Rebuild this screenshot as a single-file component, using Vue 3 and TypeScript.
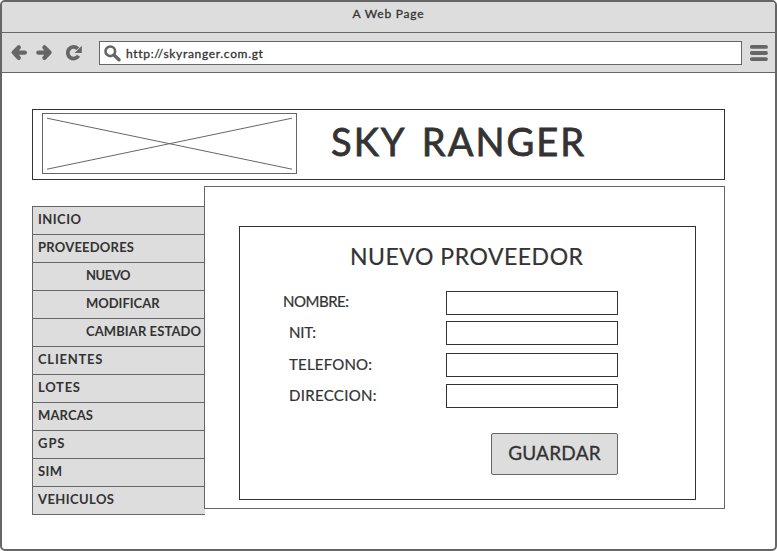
<script setup lang="ts">
import type { Directive } from 'vue'

interface MenuItem {
  label: string
  width: number
  sub?: boolean
}

interface Field {
  id: string
  label: string
  width: number
}

const menu: MenuItem[] = [
  { label: 'INICIO', width: 43 },
  { label: 'PROVEEDORES', width: 96 },
  { label: 'NUEVO', width: 44.5, sub: true },
  { label: 'MODIFICAR', width: 73.5, sub: true },
  { label: 'CAMBIAR ESTADO', width: 115, sub: true },
  { label: 'CLIENTES', width: 64.5 },
  { label: 'LOTES', width: 42 },
  { label: 'MARCAS', width: 55 },
  { label: 'GPS', width: 26.5 },
  { label: 'SIM', width: 24 },
  { label: 'VEHICULOS', width: 76 },
]

const fields: Field[] = [
  { id: 'nombre', label: 'NOMBRE:', width: 66 },
  { id: 'nit', label: 'NIT:', width: 27 },
  { id: 'telefono', label: 'TELEFONO:', width: 83 },
  { id: 'direccion', label: 'DIRECCION:', width: 87.5 },
]

// Tracks the letters out (or in) so that a caption takes the given width.
const vFit: Directive<HTMLElement, number> = {
  mounted(el, { value }) {
    const count = (el.textContent ?? '').trim().length
    const natural = el.getBoundingClientRect().width
    if (count > 1) el.style.letterSpacing = `${(value - natural) / (count - 1)}px`
  },
}
</script>

<template>
  <div class="window">
    <header class="titlebar"><span v-fit="71" class="fit">A Web Page</span></header>

    <nav class="toolbar">
      <svg class="arrow" width="17" height="16" viewBox="0 0 17 16">
        <path d="M8.7 2.4 3.7 7.6l5 5.2M4 7.6h10.8" />
      </svg>
      <svg class="arrow forward" width="17" height="16" viewBox="0 0 17 16">
        <path d="M8.5 2.4l5 5.2-5 5.2M13.2 7.6H2.4" />
      </svg>
      <svg class="reload" width="17" height="16" viewBox="0 0 17 16">
        <path class="ring" d="M12.8 3.8A5.8 5.8 0 1 0 13.5 10.8" />
        <path class="tip" d="M16.8 .8V8H9.6z" />
      </svg>
      <div class="address">
        <svg class="search" width="17" height="17" viewBox="0 0 17 17">
          <circle cx="6.3" cy="6.3" r="4.8" />
          <path d="M10 10l5 4.8" />
        </svg>
        <span v-fit="136.5" class="fit url">http://skyranger.com.gt</span>
      </div>
      <svg class="burger" width="19" height="18" viewBox="0 0 19 18">
        <path d="M2.8 2.9h14.2M2.8 9h14.2M2.8 15.1h14.2" />
      </svg>
    </nav>

    <main class="page">
      <section class="banner">
        <svg class="picture" width="255" height="61" viewBox="0 0 255 61">
          <rect x=".5" y=".5" width="254" height="60" />
          <path d="M5 5.2 250 56.2M5 56.2 250 5.2" />
        </svg>
        <h1><span v-fit="253" class="fit">SKY RANGER</span></h1>
      </section>

      <div class="body">
        <ul class="menu">
          <li v-for="item in menu" :key="item.label" :class="{ sub: item.sub }">
            <span v-fit="item.width" class="fit">{{ item.label }}</span>
          </li>
        </ul>

        <section class="panel">
          <form class="card" @submit.prevent>
            <h2><span v-fit="233" class="fit">NUEVO PROVEEDOR</span></h2>
            <div v-for="field in fields" :key="field.id" class="field" :class="field.id">
              <label :for="field.id"><span v-fit="field.width" class="fit">{{ field.label }}</span></label>
              <input :id="field.id" type="text" />
            </div>
            <button type="submit"><span v-fit="92.5" class="fit">GUARDAR</span></button>
          </form>
        </section>
      </div>
    </main>
  </div>
</template>

<style>
body {
  background: #fff;
}
</style>

<style scoped>
.window {
  box-sizing: border-box;
  width: 777px;
  height: 551px;
  border: 2px solid #666;
  border-radius: 5px;
  background: #fff;
  color: #333;
  font-family: Lato, "Liberation Sans", sans-serif;
  overflow: hidden;
}
.fit {
  display: inline-block;
  white-space: nowrap;
}
.titlebar {
  height: 30px;
  border-bottom: 1px solid #666;
  background: #ddd;
  text-align: center;
  font-size: 12px;
  line-height: 24px;
  -webkit-text-stroke: 0.3px #333;
}
.toolbar {
  display: flex;
  align-items: flex-start;
  box-sizing: border-box;
  height: 40px;
  padding: 8px 7px 0 8px;
  border-bottom: 1px solid #666;
  background: #ddd;
}
.toolbar svg {
  flex: none;
  fill: none;
  stroke: #666;
}
.toolbar .arrow {
  margin-top: 4px;
  stroke-width: 4.4;
  stroke-linecap: round;
  stroke-linejoin: round;
  overflow: visible;
}
.toolbar .forward {
  margin-left: 9px;
}
.reload {
  margin: 4px 0 0 12px;
}
.toolbar .ring {
  stroke-width: 3.8;
}
.toolbar .tip {
  fill: #666;
  stroke: none;
}
.address {
  display: flex;
  box-sizing: border-box;
  width: 643px;
  height: 24px;
  margin-left: 17px;
  border: 1px solid #666;
  background: #fff;
}
.toolbar .search {
  margin: 3px 0 0 4px;
  stroke-width: 2.6;
}
.search path {
  stroke-width: 3.4;
  stroke-linecap: round;
}
.url {
  margin-left: 5px;
  font-size: 12px;
  line-height: 23px;
  -webkit-text-stroke: 0.3px #333;
}
.burger {
  margin: 3px 0 0 7px;
  stroke-width: 3.8;
  stroke-linecap: round;
}
.page {
  padding: 36px 50px 0 30px;
}
.banner {
  display: flex;
  box-sizing: border-box;
  height: 71px;
  padding: 3px 9px;
  border: 1px solid #333;
}
.picture {
  flex: none;
  fill: none;
  stroke: #666;
}
h1,
h2 {
  margin: 0;
  font-weight: 400;
}
h1 {
  margin-left: 34px;
  font-size: 38px;
  line-height: 56px;
  word-spacing: 5px;
  -webkit-text-stroke: 0.8px #333;
}
.body {
  display: flex;
  align-items: flex-start;
  margin-top: 6px;
}
.menu {
  box-sizing: border-box;
  width: 173px;
  margin: 20px -1px 0 0;
  padding: 0;
  border: solid #666;
  border-width: 0 0 1px 1px;
  background: #ddd;
  list-style: none;
  font-size: 13px;
  font-weight: 700;
  line-height: 25px;
}
.menu li {
  box-sizing: border-box;
  height: 28px;
  padding-left: 5px;
  border-top: 1px solid #666;
}
.menu .sub {
  padding-left: 53px;
}
.panel {
  position: relative;
  box-sizing: border-box;
  width: 521px;
  height: 323px;
  padding: 39px 28px 8px 34px;
  border: 1px solid #666;
}
.card {
  box-sizing: border-box;
  height: 274px;
  padding: 13px 77px 0 43px;
  border: 1px solid #333;
}
h2 {
  padding-left: 67px;
  font-size: 23px;
  line-height: 32px;
  -webkit-text-stroke: 0.2px #333;
}
.field {
  display: flex;
  justify-content: space-between;
  padding-left: 6px;
}
.nombre {
  margin-top: 19px;
  padding-left: 0;
}
.nit {
  margin-top: 6px;
}
.telefono {
  margin-top: 8px;
}
.direccion {
  margin-top: 7px;
}
label {
  font-size: 15px;
  line-height: 22px;
  -webkit-text-stroke: 0.2px #333;
}
.nombre label {
  line-height: 20px;
}
input {
  box-sizing: border-box;
  width: 172px;
  height: 24px;
  margin: 0;
  padding: 0 4px;
  border: 1px solid #333;
  background: #fff;
  font: inherit;
}
button {
  display: block;
  box-sizing: border-box;
  width: 127px;
  height: 42px;
  margin: 25px 0 0 auto;
  padding: 0 0 2px;
  border: 1px solid #666;
  border-radius: 2px;
  background: #ddd;
  color: #333;
  font-family: inherit;
  font-size: 19px;
  line-height: 38px;
  -webkit-text-stroke: 0.3px #333;
}
</style>
